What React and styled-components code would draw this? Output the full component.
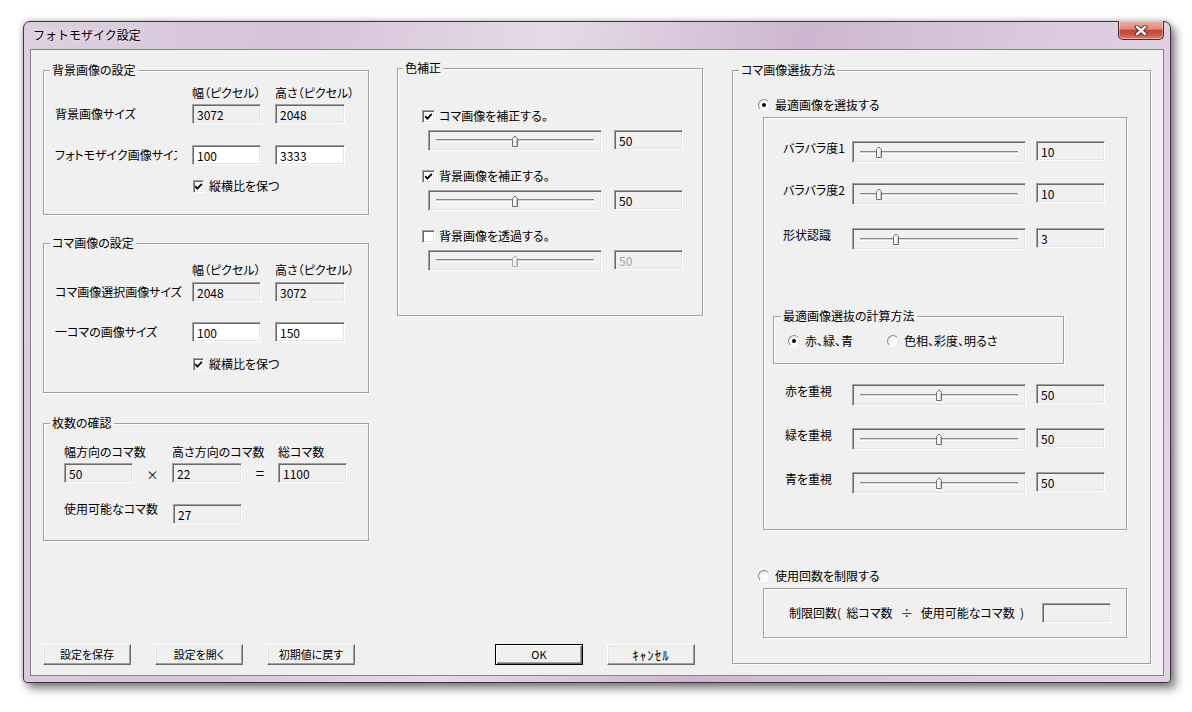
import React from "react";
import styled, { createGlobalStyle, css } from "styled-components";

const GlobalStyle = createGlobalStyle`
  html, body {
    margin: 0;
    background: #ffffff;
  }
  body {
    font-family: "Noto Sans CJK JP", "Noto Sans", sans-serif;
    font-size: 12px;
    line-height: 14px;
    color: #000;
    font-feature-settings: "palt" 1;
  }
`;

const Screen = styled.div`
  box-sizing: border-box;
  width: 1192px;
  height: 712px;
  padding: 21px 0 0 23px;
  overflow: hidden;
`;

const Window = styled.div`
  box-sizing: border-box;
  width: 1148px;
  height: 662px;
  display: flex;
  flex-direction: column;
  padding: 0 6px 6px;
  border: 1px solid #3e343f;
  border-radius: 7px 7px 4px 4px;
  background: linear-gradient(
    100deg,
    #ddcfe0 0%,
    #d6c3d9 22%,
    #e5dae7 42%,
    #cdb7d0 62%,
    #dccbdf 82%,
    #e2d4e4 100%
  );
  box-shadow: 5px 6px 10px rgba(0, 0, 0, 0.45), 0 0 6px rgba(0, 0, 0, 0.3);
`;

const TitleBar = styled.div`
  height: 27px;
  display: flex;
  justify-content: space-between;
  align-items: flex-start;
`;

const Title = styled.div`
  padding: 6px 0 0 3px;
  font-size: 12px;
  line-height: 14px;
  font-feature-settings: normal;
  text-shadow: 0 0 6px rgba(255, 255, 255, 0.9);
`;

const CloseButton = styled.div`
  box-sizing: border-box;
  width: 46px;
  height: 19px;
  margin-top: -1px;
  display: flex;
  align-items: center;
  justify-content: center;
  border: 1px solid #5a2824;
  border-top: none;
  border-radius: 0 0 5px 5px;
  background: linear-gradient(
    #eab0a6 0%,
    #dc8a7c 45%,
    #c4432f 52%,
    #cd5a44 78%,
    #e1866c 100%
  );
  box-shadow: inset 0 0 0 1px rgba(255, 255, 255, 0.35);
`;

const Client = styled.div`
  flex: 1;
  display: flex;
  padding: 20px 12px 10px 12px;
  border: 1px solid #8d7d8f;
  background: #f0f0f0;
`;

const Column = styled.div`
  width: ${(p) => p.$w}px;
  margin-left: ${(p) => p.$ml || 0}px;
  display: flex;
  flex-direction: column;
`;

const Group = styled.div`
  position: relative;
  box-sizing: border-box;
  width: ${(p) => p.$w}px;
  height: ${(p) => p.$h}px;
  margin-top: ${(p) => p.$mt || 0}px;
  margin-left: ${(p) => p.$ml || 0}px;
  padding-left: ${(p) => p.$pl || 0}px;
  flex-shrink: 0;
  border: 1px solid #a0a0a0;
  box-shadow: 1px 1px 0 #fff, inset 1px 1px 0 #fff;
`;

const Legend = styled.span`
  position: absolute;
  top: -8px;
  left: ${(p) => p.$left || 6}px;
  padding: 0 2px;
  background: #f0f0f0;
  white-space: nowrap;
`;

const FormRow = styled.div`
  display: grid;
  grid-template-columns: 123px 69px 70px;
  column-gap: 14px;
  align-items: center;
  margin-top: ${(p) => p.$mt}px;
  white-space: nowrap;
`;

const Label = styled.span`
  white-space: nowrap;
  ${(p) =>
    p.$clip &&
    css`
      width: ${p.$clip}px;
      overflow: hidden;
    `}
`;

const CountRow = styled.div`
  display: grid;
  grid-template-columns: 69px 39px 70px 36px 69px;
  align-items: ${(p) => p.$align || "center"};
  margin-top: ${(p) => p.$mt}px;
  white-space: nowrap;
`;

const Operator = styled.span`
  text-align: center;
  font-size: ${(p) => p.$size || 12}px;
  margin-top: ${(p) => p.$mt || 0}px;
`;

const Field = styled.div`
  box-sizing: border-box;
  width: ${(p) => p.$w || 69}px;
  height: 20px;
  margin-top: ${(p) => p.$mt || 0}px;
  margin-left: ${(p) => p.$ml || 0}px;
  padding: 3px 0 0 4px;
  border: 1px solid;
  border-color: #a0a0a0 #ffffff #ffffff #a0a0a0;
  box-shadow: inset 1px 1px 0 #696969, inset -1px -1px 0 #e3e3e3;
  background: ${(p) => (p.$white ? "#ffffff" : "#f0f0f0")};
  color: ${(p) => (p.$disabled ? "#a3a3a3" : "#000")};
  font-size: 12px;
  line-height: 13px;
  flex-shrink: 0;
`;

const SliderBox = styled.div`
  box-sizing: border-box;
  width: 174px;
  height: ${(p) => p.$h || 21}px;
  display: flex;
  align-items: center;
  padding: 0 7px;
  border: 1px solid;
  border-color: #a0a0a0 #ffffff #ffffff #a0a0a0;
  box-shadow: inset 1px 1px 0 #696969, inset -1px -1px 0 #e3e3e3;
  background: #f0f0f0;
  flex-shrink: 0;
`;

const Track = styled.div`
  position: relative;
  flex: 1;
  height: 1px;
  border-top: 1px solid #8a8a8a;
  border-bottom: 1px solid #ffffff;
  background: #d4d4d4;
`;

const Thumb = styled.svg`
  position: absolute;
  top: 50%;
  transform: translate(-50%, -50%);
  display: block;
`;

const CheckRow = styled.label`
  display: flex;
  align-items: center;
  gap: ${(p) => p.$gap || 4}px;
  height: 14px;
  margin-top: ${(p) => p.$mt || 0}px;
  margin-left: ${(p) => p.$ml || 0}px;
  white-space: nowrap;
`;

const CheckBox = styled.span`
  box-sizing: border-box;
  width: 13px;
  height: 13px;
  display: flex;
  align-items: center;
  justify-content: center;
  border: 1px solid;
  border-color: #a0a0a0 #ffffff #ffffff #a0a0a0;
  box-shadow: inset 1px 1px 0 #696969, inset -1px -1px 0 #e3e3e3;
  background: #ffffff;
`;

const RadioRow = styled.div`
  display: flex;
  align-items: center;
  height: 14px;
  margin-top: ${(p) => p.$mt || 0}px;
  padding-left: ${(p) => p.$pl || 0}px;
`;

const RadioItem = styled.label`
  display: flex;
  align-items: center;
  gap: 5px;
  width: ${(p) => (p.$w ? `${p.$w}px` : "auto")};
  white-space: nowrap;
`;

const RadioDot = styled.span`
  box-sizing: border-box;
  width: 12px;
  height: 12px;
  border-radius: 50%;
  display: flex;
  align-items: center;
  justify-content: center;
  border: 1px solid;
  border-color: #8c8c8c #e6e6e6 #ffffff #8c8c8c;
  background: radial-gradient(circle at 60% 60%, #ffffff 0%, #f6f6f6 55%, #d8d8d8 100%);

  &::after {
    content: "";
    width: 4px;
    height: 4px;
    border-radius: 50%;
    background: ${(p) => (p.$on ? "#000" : "transparent")};
  }
`;

const SliderRow = styled.div`
  display: flex;
  align-items: flex-start;
  margin-top: ${(p) => p.$mt}px;
  padding-left: ${(p) => p.$pl || 0}px;
`;

const SliderLabel = styled.span`
  width: ${(p) => p.$w || 69}px;
  white-space: nowrap;
`;

const LimitRow = styled.div`
  height: 100%;
  display: flex;
  align-items: center;
  padding: 0 15px 0 25px;
  white-space: pre;
`;

const ButtonRow = styled.div`
  margin-top: auto;
  display: flex;
  gap: 24px;
  padding-left: ${(p) => p.$pl || 0}px;
`;

const Button = styled.button`
  box-sizing: border-box;
  width: 88px;
  height: 21px;
  margin: 0;
  padding: 0;
  background: #f0f0f0;
  color: #000;
  font-family: "Noto Sans CJK JP", sans-serif;
  font-size: ${(p) => (p.$narrow ? 13 : 11)}px;
  line-height: 13px;
  letter-spacing: ${(p) => (p.$narrow ? 1 : 0)}px;
  font-feature-settings: "palt" 1;
  border: 1px solid;
  border-color: #ffffff #696969 #696969 #ffffff;
  box-shadow: inset -1px -1px 0 #a0a0a0, inset 1px 1px 0 #e3e3e3;

  ${(p) =>
    p.$default &&
    css`
      border-color: #000;
      box-shadow: inset 1px 1px 0 #fff, inset -1px -1px 0 #696969,
        inset -2px -2px 0 #a0a0a0;
    `}
`;

function Check({ on }) {
  return (
    <CheckBox>
      {on && (
        <svg width="9" height="9" viewBox="0 0 9 9">
          <path d="M1.2 4.2 L3.4 6.6 L7.8 1.8" fill="none" stroke="#000" strokeWidth="1.8" />
        </svg>
      )}
    </CheckBox>
  );
}

function Slider({ pos, h, disabled }) {
  return (
    <SliderBox $h={h}>
      <Track>
        <Thumb width="8" height="12" viewBox="0 0 8 12" style={{ left: `${pos}%` }}>
          <path
            d="M1.5 11.5 V3.5 L4 1 L6.5 3.5 V11.5 Z"
            fill={disabled ? "#f2f2f2" : "#f6f6f6"}
            stroke={disabled ? "#a8a8a8" : "#6f6f6f"}
          />
          <path d="M5.5 4 V10.5" stroke="#c8c8c8" />
        </Thumb>
      </Track>
    </SliderBox>
  );
}

function CloseIcon() {
  return (
    <svg width="14" height="11" viewBox="0 0 14 11">
      <path d="M3 2 L11 9 M11 2 L3 9" stroke="#4a1f1a" strokeWidth="4.2" strokeLinecap="square" />
      <path d="M3 2 L11 9 M11 2 L3 9" stroke="#ffffff" strokeWidth="2.4" strokeLinecap="square" />
    </svg>
  );
}

const weightRows = [
  { label: "赤を重視", mt: 20 },
  { label: "緑を重視", mt: 22 },
  { label: "青を重視", mt: 22 },
];

export default function App() {
  return (
    <Screen>
      <GlobalStyle />
      <Window>
        <TitleBar>
          <Title>フォトモザイク設定</Title>
          <CloseButton>
            <CloseIcon />
          </CloseButton>
        </TitleBar>

        <Client>
          <Column $w={326}>
            <Group $w={326} $h={145} $pl={11}>
              <Legend>背景画像の設定</Legend>
              <FormRow $mt={15}>
                <span />
                <span>幅（ピクセル）</span>
                <span>高さ（ピクセル）</span>
              </FormRow>
              <FormRow $mt={4}>
                <Label>背景画像サイズ</Label>
                <Field>3072</Field>
                <Field $w={70}>2048</Field>
              </FormRow>
              <FormRow $mt={21}>
                <Label $clip={122}>フォトモザイク画像サイズ</Label>
                <Field $white>100</Field>
                <Field $w={70} $white>3333</Field>
              </FormRow>
              <FormRow $mt={14}>
                <span />
                <CheckRow $ml={1} $gap={5}>
                  <Check on />
                  縦横比を保つ
                </CheckRow>
              </FormRow>
            </Group>

            <Group $w={326} $h={150} $mt={28} $pl={11}>
              <Legend>コマ画像の設定</Legend>
              <FormRow $mt={19}>
                <span />
                <span>幅（ピクセル）</span>
                <span>高さ（ピクセル）</span>
              </FormRow>
              <FormRow $mt={5}>
                <Label>コマ画像選択画像サイズ</Label>
                <Field>2048</Field>
                <Field $w={70}>3072</Field>
              </FormRow>
              <FormRow $mt={20}>
                <Label>一コマの画像サイズ</Label>
                <Field $white>100</Field>
                <Field $w={70} $white>150</Field>
              </FormRow>
              <FormRow $mt={15}>
                <span />
                <CheckRow $ml={1} $gap={5}>
                  <Check on />
                  縦横比を保つ
                </CheckRow>
              </FormRow>
            </Group>

            <Group $w={326} $h={118} $mt={30} $pl={20}>
              <Legend>枚数の確認</Legend>
              <CountRow $mt={21}>
                <span>幅方向のコマ数</span>
                <span />
                <span>高さ方向のコマ数</span>
                <span />
                <span>総コマ数</span>
              </CountRow>
              <CountRow $mt={4}>
                <Field>50</Field>
                <Operator $mt={4}>×</Operator>
                <Field $w={70}>22</Field>
                <Operator $size={15}>=</Operator>
                <Field>1100</Field>
              </CountRow>
              <CountRow $mt={19} $align="start">
                <span style={{ gridColumn: "1 / span 2" }}>使用可能なコマ数</span>
                <Field $mt={2} $ml={1}>27</Field>
              </CountRow>
            </Group>

            <ButtonRow>
              <Button>設定を保存</Button>
              <Button>設定を開く</Button>
              <Button>初期値に戻す</Button>
            </ButtonRow>
          </Column>

          <Column $w={306} $ml={28}>
            <Group $w={306} $h={248} $mt={-2} $pl={24}>
              <Legend $left={5}>色補正</Legend>
              <CheckRow $mt={40}>
                <Check on />
                コマ画像を補正する。
              </CheckRow>
              <SliderRow $mt={7} $pl={6}>
                <Slider pos={50} />
                <Field $ml={12}>50</Field>
              </SliderRow>
              <CheckRow $mt={18}>
                <Check on />
                背景画像を補正する。
              </CheckRow>
              <SliderRow $mt={7} $pl={6}>
                <Slider pos={50} />
                <Field $ml={12}>50</Field>
              </SliderRow>
              <CheckRow $mt={18}>
                <Check />
                背景画像を透過する。
              </CheckRow>
              <SliderRow $mt={7} $pl={6}>
                <Slider pos={50} disabled />
                <Field $ml={12} $disabled>50</Field>
              </SliderRow>
            </Group>

            <ButtonRow $pl={98}>
              <Button $default>OK</Button>
              <Button $narrow>ｷｬﾝｾﾙ</Button>
            </ButtonRow>
          </Column>

          <Group $w={419} $h={594} $ml={29}>
            <Legend $left={6}>コマ画像選抜方法</Legend>
            <RadioRow $mt={27} $pl={25}>
              <RadioItem>
                <RadioDot $on />
                最適画像を選抜する
              </RadioItem>
            </RadioRow>

            <Group $w={364} $h={413} $mt={5} $ml={30}>
              <SliderRow $mt={23} $pl={19}>
                <SliderLabel>バラバラ度1</SliderLabel>
                <Slider pos={12} h={22} />
                <Field $ml={10}>10</Field>
              </SliderRow>
              <SliderRow $mt={20} $pl={19}>
                <SliderLabel>バラバラ度2</SliderLabel>
                <Slider pos={12} h={22} />
                <Field $ml={10}>10</Field>
              </SliderRow>
              <SliderRow $mt={23} $pl={19}>
                <SliderLabel>形状認識</SliderLabel>
                <Slider pos={23} h={22} />
                <Field $ml={10}>3</Field>
              </SliderRow>

              <Group $w={291} $h={48} $mt={66} $ml={9}>
                <Legend $left={7}>最適画像選抜の計算方法</Legend>
                <RadioRow $mt={17} $pl={14}>
                  <RadioItem $w={99}>
                    <RadioDot $on />
                    赤、緑、青
                  </RadioItem>
                  <RadioItem>
                    <RadioDot />
                    色相、彩度、明るさ
                  </RadioItem>
                </RadioRow>
              </Group>

              {weightRows.map((row) => (
                <SliderRow key={row.label} $mt={row.mt} $pl={21}>
                  <SliderLabel $w={67}>{row.label}</SliderLabel>
                  <Slider pos={50} h={22} />
                  <Field $ml={10}>50</Field>
                </SliderRow>
              ))}
            </Group>

            <RadioRow $mt={39} $pl={25}>
              <RadioItem>
                <RadioDot />
                使用回数を制限する
              </RadioItem>
            </RadioRow>

            <Group $w={364} $h={50} $mt={5} $ml={30}>
              <LimitRow>
                <span>制限回数(  総コマ数   ÷   使用可能なコマ数  )</span>
                <Field $w={69} style={{ marginLeft: "auto" }} />
              </LimitRow>
            </Group>
          </Group>
        </Client>
      </Window>
    </Screen>
  );
}
